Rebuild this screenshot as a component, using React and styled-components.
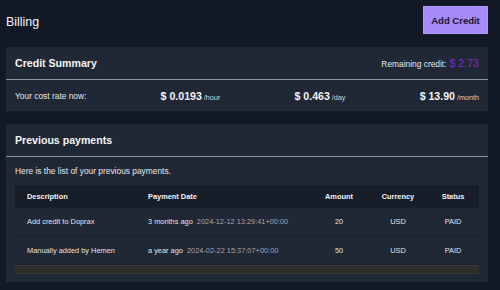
import React from "react";
import styled, { createGlobalStyle } from "styled-components";

const GlobalStyle = createGlobalStyle`
  html, body {
    margin: 0;
    padding: 0;
    background: #121826;
    height: 290px;
    overflow: hidden;
  }
  * { box-sizing: border-box; }
  body {
    font-family: "Liberation Sans", Arial, sans-serif;
    color: #e5e7eb;
  }
`;

const Page = styled.div`
  padding: 6px 12px 0 6px;
`;

const TopBar = styled.div`
  display: flex;
  justify-content: space-between;
  align-items: center;
  margin-bottom: 13px;
`;

const PageTitle = styled.h1`
  margin: 0;
  padding-top: 3px;
  font-size: 12.4px;
  font-weight: 400;
  color: #f3f4f6;
`;

const Button = styled.button`
  height: 28px;
  width: 65px;
  padding: 0;
  border: 1px solid #b597fb;
  background: #a68af8;
  color: #1b1530;
  font-family: inherit;
  font-weight: 700;
  font-size: 9.5px;
  cursor: pointer;
`;

const Card = styled.section`
  background: #202735;
  margin-bottom: 13px;
  padding-bottom: ${(p) => p.$padBottom || 0}px;
`;

const CardHeader = styled.div`
  height: 33px;
  padding: 0 9px;
  display: flex;
  justify-content: space-between;
  align-items: center;
  border-bottom: 1px solid #8b929c;
`;

const CardTitle = styled.h2`
  margin: 0;
  font-size: 10.6px;
  font-weight: 700;
  color: #f3f4f6;
`;

const Remaining = styled.div`
  font-size: 8.4px;
  color: #e5e7eb;
  display: flex;
  align-items: baseline;
  gap: 3px;
`;

const Credit = styled.span`
  font-size: 10.6px;
  color: #7b2ed2;
`;

const RateRow = styled.div`
  height: 31px;
  padding: 0 9px;
  display: flex;
  justify-content: space-between;
  align-items: center;
`;

const Label = styled.span`
  font-size: 8.4px;
  color: #e5e7eb;
`;

const Rate = styled.span`
  font-size: 10.6px;
  font-weight: 700;
  color: #f3f4f6;
`;

const Unit = styled.span`
  font-size: 7.2px;
  font-weight: 400;
  color: #d1d5db;
  margin-left: 2px;
`;

const Intro = styled.p`
  margin: 0;
  height: 28px;
  padding: 0 9px;
  display: flex;
  align-items: center;
  font-size: 8.4px;
  color: #e5e7eb;
`;

const Table = styled.div`
  margin: 0 9px;
`;

const Row = styled.div`
  display: grid;
  grid-template-columns: 121px 173px 60px 58px 1fr;
  align-items: center;
  height: ${(p) => (p.$head ? 23 : 28.5)}px;
  background: ${(p) => (p.$head ? "#171d29" : "transparent")};
  border-bottom: ${(p) => (p.$head ? "none" : "1px solid #1a202b")};
  font-size: 7.4px;
  font-weight: ${(p) => (p.$head ? 700 : 400)};
  color: ${(p) => (p.$head ? "#f3f4f6" : "#e2e4e8")};
`;

const Cell = styled.div`
  padding-left: ${(p) => (p.$center ? 0 : 12)}px;
  text-align: ${(p) => (p.$center ? "center" : "left")};
  white-space: nowrap;
`;

const Stamp = styled.span`
  color: #a0a6b0;
  margin-left: 4px;
`;

const ScrollTrack = styled.div`
  height: 9px;
  background: #2d2d2c;
  border-top: 1px solid #3d3d3b;
  border-bottom: 1px solid #363634;
`;

const rates = [
  { value: "$ 0.0193", unit: "/hour" },
  { value: "$ 0.463", unit: "/day" },
  { value: "$ 13.90", unit: "/month" },
];

const payments = [
  {
    desc: "Add credit to Doprax",
    ago: "3 months ago",
    date: "2024-12-12 13:29:41+00:00",
    amount: 20,
  },
  {
    desc: "Manually added by Hemen",
    ago: "a year ago",
    date: "2024-02-22 15:37:07+00:00",
    amount: 50,
  },
];

export default function App() {
  return (
    <Page>
      <GlobalStyle />
      <TopBar>
        <PageTitle>Billing</PageTitle>
        <Button>Add Credit</Button>
      </TopBar>

      <Card>
        <CardHeader>
          <CardTitle>Credit Summary</CardTitle>
          <Remaining>
            Remaining credit: <Credit>$ 2.73</Credit>
          </Remaining>
        </CardHeader>
        <RateRow>
          <Label>Your cost rate now:</Label>
          {rates.map((r) => (
            <Rate key={r.unit}>
              {r.value}
              <Unit>{r.unit}</Unit>
            </Rate>
          ))}
        </RateRow>
      </Card>

      <Card $padBottom={8}>
        <CardHeader>
          <CardTitle>Previous payments</CardTitle>
        </CardHeader>
        <Intro>Here is the list of your previous payments.</Intro>
        <Table>
          <Row $head>
            <Cell>Description</Cell>
            <Cell>Payment Date</Cell>
            <Cell $center>Amount</Cell>
            <Cell $center>Currency</Cell>
            <Cell $center>Status</Cell>
          </Row>
          {payments.map((p) => (
            <Row key={p.date}>
              <Cell>{p.desc}</Cell>
              <Cell>
                {p.ago}
                <Stamp>{p.date}</Stamp>
              </Cell>
              <Cell $center>{p.amount}</Cell>
              <Cell $center>USD</Cell>
              <Cell $center>PAID</Cell>
            </Row>
          ))}
          <ScrollTrack />
        </Table>
      </Card>
    </Page>
  );
}
